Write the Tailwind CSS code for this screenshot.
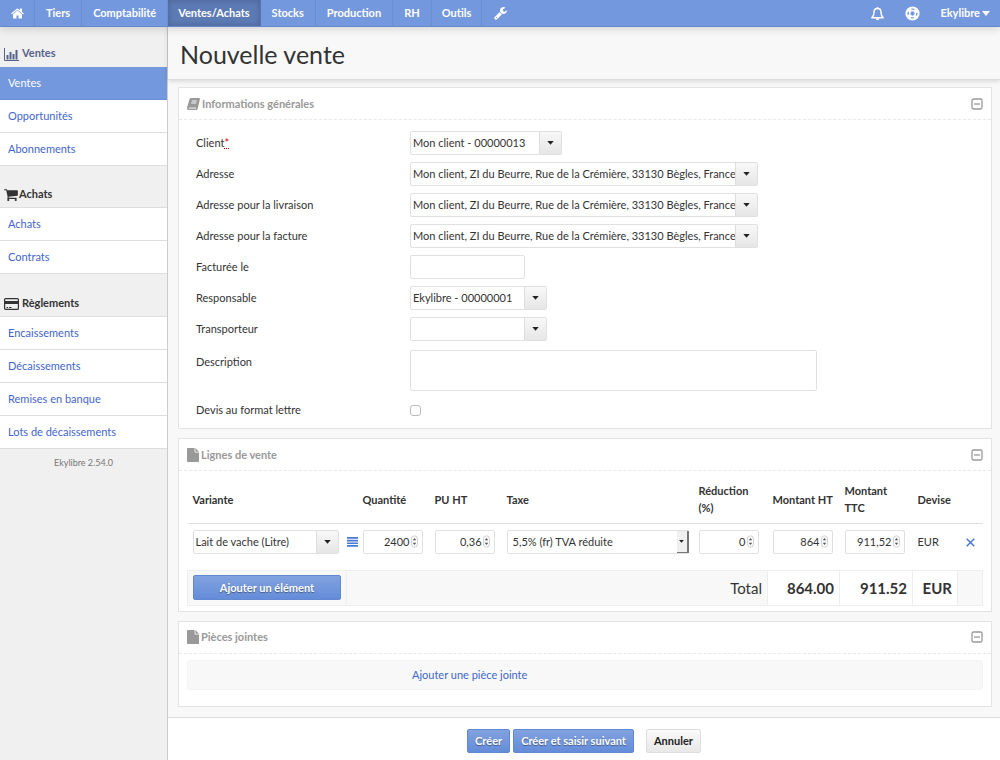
<!DOCTYPE html>
<html lang="fr">
<head>
<meta charset="utf-8">
<title>Nouvelle vente - Ekylibre</title>
<meta name="viewport" content="width=device-width, initial-scale=1">
<script src="https://cdn.jsdelivr.net/npm/@tailwindcss/browser@4"></script>
</head>
<body class="flex min-h-screen flex-col bg-[#f8f8f8] font-['Lato',sans-serif] text-[11px] leading-4 text-[#333]">

<svg class="hidden" aria-hidden="true">
  <symbol id="minus-square" viewBox="0 0 12 12"><rect x="1" y="1" width="10" height="10" rx="1.5" fill="none" stroke="#999" stroke-width="1.3"/><path d="M3 6h6" stroke="#999" stroke-width="1.3"/></symbol>
  <symbol id="file" viewBox="0 0 12 14"><path fill="#999" d="M.7 0H7.6V3.7q0 .8.8.8H12V13.3q0 .7-.7.7H.7Q0 14 0 13.3V.7Q0 0 .7 0zM8.4 0.1L11.9 3.7H8.4z"/></symbol>
  <symbol id="caret" viewBox="0 0 8 5"><path fill="#222" d="M0 0h8L4 4.6z"/></symbol>
  <symbol id="spin" viewBox="0 0 8 14"><rect x=".5" y=".5" width="7" height="13" rx="3.5" fill="#fbfbfb" stroke="#ccc"/><path fill="#555" d="M2 5.5L4 3l2 2.500zM2 8.500h4L4 11z"/></symbol>
</svg>

<header class="relative z-10 flex h-[27px] border-b border-[#6688cc] bg-[#7398de] text-[11px] font-bold text-white shadow-[0_2px_8px_rgba(0,0,0,0.15)]">
  <nav class="flex" aria-label="Principal">
    <a href="#" aria-label="Accueil" class="flex items-center border-r border-[#6b8dd2] pr-[10px] pl-[11px]"><svg class="h-[13px] w-[13px]" viewBox="64 200 1664 1400" fill="currentColor"><path d="M1472 992v480q0 26-19 45t-45 19h-384v-384h-256v384h-384q-26 0-45-19t-19-45v-480q0-1 .5-3t.5-3l575-474 575 474q1 2 1 6zm223-69l-62 74q-8 9-21 11h-3q-13 0-21-7l-692-577-692 577q-12 8-24 7-13-2-21-11l-62-74q-8-10-7-23.500t11-21.500l719-599q32-26 76-26t76 26l244 204v-195q0-14 9-23t23-9h192q14 0 23 9t9 23v408l219 182q10 8 11 21.500t-7 23.500z"/></svg></a>
    <a href="#" class="flex items-center border-r border-[#6b8dd2] px-[11px]">Tiers</a>
    <a href="#" class="flex items-center border-r border-[#6b8dd2] px-[11px]">Comptabilité</a>
    <a href="#" aria-current="page" class="flex items-center border-r border-[#5675b0] bg-[#5c7ab4] px-[10px] shadow-[inset_0_0_6px_rgba(0,0,0,0.2)]">Ventes/Achats</a>
    <a href="#" class="flex items-center border-r border-[#6b8dd2] px-[11px]">Stocks</a>
    <a href="#" class="flex items-center border-r border-[#6b8dd2] px-[11px]">Production</a>
    <a href="#" class="flex items-center border-r border-[#6b8dd2] px-[11px]">RH</a>
    <a href="#" class="flex items-center border-r border-[#6b8dd2] px-[10px]">Outils</a>
    <a href="#" aria-label="Configuration" class="flex items-center px-3"><svg class="h-[13px] w-[13px]" viewBox="60 120 1680 1680" fill="currentColor"><path d="M448 1472q0-26-19-45t-45-19-45 19-19 45 19 45 45 19 45-19 19-45zm644-420l-682 682q-37 37-90 37-52 0-91-37l-106-108q-38-36-38-90 0-53 38-91l681-681q39 98 114.500 173.500t173.500 114.500zm634-435q0 39-23 106-47 134-164.500 217.500t-258.500 83.500q-185 0-316.500-131.500t-131.500-316.500 131.500-316.500 316.500-131.500q58 0 121.500 16.500t107.500 46.500q16 11 16 28t-16 28l-293 169v224l193 107q5-3 79-48.500t135.500-81 70.500-35.500q15 0 23.500 10t8.500 25z"/></svg></a>
  </nav>
  <div class="ml-auto flex items-center pr-[10px]">
    <button type="button" aria-label="Notifications" class="mr-5"><svg class="h-[15px] w-[15px]" viewBox="0 0 15 15"><path fill="none" stroke="#fff" stroke-width="1.500" stroke-linejoin="round" d="M1.800 11.700C3.600 10 4 8.600 4 6.200 4 3.900 5.300 2.500 7.500 2.500S11 3.900 11 6.200c0 2.400.4 3.800 2.200 5.500z"/><path fill="#fff" d="M6.500 2.200Q6.500 1 7.500 1t1 1.200zM5.500 12.300h4q-.3 1.900-2 1.900t-2-1.900z"/></svg></button>
    <button type="button" aria-label="Aide" class="mr-5"><svg class="h-[15px] w-[15px]" viewBox="0 0 15 15" fill="none"><circle cx="7.500" cy="7.500" r="6.100" stroke="#fff" stroke-width="2"/><circle cx="7.500" cy="7.500" r="2.900" stroke="#fff" stroke-width="1.500"/><circle cx="7.500" cy="7.500" r="4.700" stroke="#fff" stroke-width="3" stroke-dasharray="4.380 3" stroke-dashoffset="2.190" transform="rotate(45 7.500 7.500)"/></svg></button>
    <button type="button" class="flex items-center gap-[2px] font-bold">Ekylibre<svg class="h-[5px] w-2" viewBox="0 0 8 5"><path fill="#fff" d="M0 0h8L4 5z"/></svg></button>
  </div>
</header>

<div class="flex flex-1">
  <aside class="w-[168px] shrink-0 border-r border-[#ccc] bg-[#f0f0f0]">
    <nav aria-label="Ventes et achats">
      <h2 class="flex h-10 items-end gap-[3px] pb-[6px] pl-1 font-bold text-[#56648c]"><svg class="h-[14px] w-[15px]" viewBox="0 0 15 14"><path fill="none" stroke="currentColor" d="M.5 1v12.500H15"/><path fill="currentColor" d="M2.500 8h2v4.500h-2zM5.500 5h2v7.500h-2zM8.500 7h2v5.500h-2zM11.500 3h2v9.500h-2z"/></svg>Ventes</h2>
      <ul class="text-[#3f66cc]">
        <li><a href="#" aria-current="page" class="block h-[33px] border-b border-[#6b90d8] bg-[#7398de] pl-2 leading-8 text-white">Ventes</a></li>
        <li><a href="#" class="block h-[33px] border-b border-[#ddd] bg-white pl-2 leading-8">Opportunités</a></li>
        <li><a href="#" class="block h-[33px] border-b border-[#ddd] bg-white pl-2 leading-8">Abonnements</a></li>
      </ul>
      <h2 class="flex h-[42px] items-end gap-px border-b border-[#ddd] pb-[5px] pl-1 font-bold"><svg class="h-[14px] w-[14px]" viewBox="64 200 1680 1480" fill="currentColor"><path d="M704 1536q0 52-38 90t-90 38-90-38-38-90 38-90 90-38 90 38 38 90zm896 0q0 52-38 90t-90 38-90-38-38-90 38-90 90-38 90 38 38 90zm128-1088v512q0 24-16.500 42.500t-40.500 21.500l-1044 122q13 60 13 70 0 16-24 64h920q26 0 45 19t19 45-19 45-45 19h-1024q-26 0-45-19t-19-45q0-11 8-31.500t16-36 21.500-40 15.500-29.500l-177-823h-204q-26 0-45-19t-19-45 19-45 45-19h256q16 0 28.500 6.500t19.500 15.500 13 24.500 8 26 5.500 29.500 4.500 26h1201q26 0 45 19t19 45z"/></svg>Achats</h2>
      <ul class="text-[#3f66cc]">
        <li><a href="#" class="block h-[33px] border-b border-[#ddd] bg-white pl-2 leading-8">Achats</a></li>
        <li><a href="#" class="block h-[33px] border-b border-[#ddd] bg-white pl-2 leading-8">Contrats</a></li>
      </ul>
      <h2 class="flex h-[43px] items-end gap-[3px] border-b border-[#ddd] pb-[5px] pl-1 font-bold"><svg class="h-[14px] w-[15px]" viewBox="0 0 15 14"><rect x=".6" y="1.600" width="13.800" height="10.800" rx="1" fill="none" stroke="currentColor" stroke-width="1.200"/><path fill="currentColor" d="M1 4h13v3H1zM2.500 10h1.500v1H2.500zM5 10h2.500v1H5z"/></svg>Règlements</h2>
      <ul class="text-[#3f66cc]">
        <li><a href="#" class="block h-[33px] border-b border-[#ddd] bg-white pl-2 leading-8">Encaissements</a></li>
        <li><a href="#" class="block h-[33px] border-b border-[#ddd] bg-white pl-2 leading-8">Décaissements</a></li>
        <li><a href="#" class="block h-[33px] border-b border-[#ddd] bg-white pl-2 leading-8">Remises en banque</a></li>
        <li><a href="#" class="block h-[33px] border-b border-[#ddd] bg-white pl-2 leading-8">Lots de décaissements</a></li>
      </ul>
    </nav>
    <p class="pt-[6px] text-center text-[9px] text-[#777]">Ekylibre 2.54.0</p>
  </aside>

  <main class="flex min-w-0 flex-1 flex-col">
    <div class="border-b border-[#ddd] bg-[#f8f8f8] px-3 pt-[7px] pb-[5px] shadow-[0_1px_5px_rgba(0,0,0,0.15)]">
      <h1 class="text-[25px] leading-10">Nouvelle vente</h1>
    </div>

    <form class="flex flex-1 flex-col">
      <div class="flex flex-1 flex-col gap-[9px] pt-[7px] pr-2 pl-[10px]">

        <section class="border border-[#e3e3e3] bg-white">
          <div class="flex h-8 items-center border-b border-dashed border-[#e8e8e8] px-2">
            <svg class="mr-[2px] h-3 w-[13px]" viewBox="0 0 13 12"><path fill="#999" d="M4.200 0H12q1.200 0 .9 1.200L10.700 10.500Q10.300 12 9 12H1.600Q0 12 0 10.300q0-.5.2-1.200L2.500 1.300Q2.900 0 4.200 0z"/><path fill="none" stroke="#fff" stroke-width=".9" d="M4.800 3h5M4.200 5h5M1.800 10.100h7.300"/></svg>
            <h2 class="font-bold text-[#999]">Informations générales</h2>
            <button type="button" aria-label="Replier les informations générales" class="ml-auto"><svg class="h-3 w-3"><use href="#minus-square"/></svg></button>
          </div>
          <div class="flex flex-col gap-[7px] px-[17px] pt-[11px] pb-2">
            <div class="flex items-center"><label for="client" class="w-[214px]">Client<abbr title="Obligatoire" class="text-[#d00] underline decoration-dotted">*</abbr></label>
              <div class="flex h-6 w-[152px] rounded-[2px] border border-[#e0e0e0] bg-white"><input id="client" class="min-w-0 flex-1 pl-[2px]" value="Mon client - 00000013"><button type="button" aria-label="Choisir le client" class="flex w-[22px] items-center justify-center border-l border-[#ddd] bg-linear-to-b from-[#f8f8f8] to-[#e6e6e6]"><svg class="h-[4px] w-[7px]"><use href="#caret"/></svg></button></div></div>
            <div class="flex items-center"><label for="adresse" class="w-[214px]">Adresse</label>
              <div class="flex h-6 w-[348px] rounded-[2px] border border-[#e0e0e0] bg-white"><input id="adresse" class="min-w-0 flex-1 pl-[2px]" value="Mon client, ZI du Beurre, Rue de la Crémière, 33130 Bègles, France"><button type="button" aria-label="Choisir l’adresse" class="flex w-[22px] items-center justify-center border-l border-[#ddd] bg-linear-to-b from-[#f8f8f8] to-[#e6e6e6]"><svg class="h-[4px] w-[7px]"><use href="#caret"/></svg></button></div></div>
            <div class="flex items-center"><label for="livraison" class="w-[214px]">Adresse pour la livraison</label>
              <div class="flex h-6 w-[348px] rounded-[2px] border border-[#e0e0e0] bg-white"><input id="livraison" class="min-w-0 flex-1 pl-[2px]" value="Mon client, ZI du Beurre, Rue de la Crémière, 33130 Bègles, France"><button type="button" aria-label="Choisir l’adresse de livraison" class="flex w-[22px] items-center justify-center border-l border-[#ddd] bg-linear-to-b from-[#f8f8f8] to-[#e6e6e6]"><svg class="h-[4px] w-[7px]"><use href="#caret"/></svg></button></div></div>
            <div class="flex items-center"><label for="facture" class="w-[214px]">Adresse pour la facture</label>
              <div class="flex h-6 w-[348px] rounded-[2px] border border-[#e0e0e0] bg-white"><input id="facture" class="min-w-0 flex-1 pl-[2px]" value="Mon client, ZI du Beurre, Rue de la Crémière, 33130 Bègles, France"><button type="button" aria-label="Choisir l’adresse de facturation" class="flex w-[22px] items-center justify-center border-l border-[#ddd] bg-linear-to-b from-[#f8f8f8] to-[#e6e6e6]"><svg class="h-[4px] w-[7px]"><use href="#caret"/></svg></button></div></div>
            <div class="flex items-center"><label for="date" class="w-[214px]">Facturée le</label>
              <input id="date" class="h-6 w-[115px] rounded-[2px] border border-[#e0e0e0] bg-white px-[2px]"></div>
            <div class="flex items-center"><label for="responsable" class="w-[214px]">Responsable</label>
              <div class="flex h-6 w-[137px] rounded-[2px] border border-[#e0e0e0] bg-white"><input id="responsable" class="min-w-0 flex-1 pl-[2px]" value="Ekylibre - 00000001"><button type="button" aria-label="Choisir le responsable" class="flex w-[22px] items-center justify-center border-l border-[#ddd] bg-linear-to-b from-[#f8f8f8] to-[#e6e6e6]"><svg class="h-[4px] w-[7px]"><use href="#caret"/></svg></button></div></div>
            <div class="flex items-center"><label for="transporteur" class="w-[214px]">Transporteur</label>
              <div class="flex h-6 w-[137px] rounded-[2px] border border-[#e0e0e0] bg-white"><input id="transporteur" class="min-w-0 flex-1 pl-[2px]"><button type="button" aria-label="Choisir le transporteur" class="flex w-[22px] items-center justify-center border-l border-[#ddd] bg-linear-to-b from-[#f8f8f8] to-[#e6e6e6]"><svg class="h-[4px] w-[7px]"><use href="#caret"/></svg></button></div></div>
            <div class="flex items-start pt-[2px]"><label for="description" class="w-[214px] pt-1">Description</label>
              <textarea id="description" class="block h-[41px] w-[407px] resize-none rounded-[2px] border border-[#e0e0e0] bg-white px-[2px]"></textarea></div>
            <div class="flex items-center pt-[2px]"><label for="lettre" class="w-[214px] leading-5">Devis au format lettre</label>
              <input id="lettre" type="checkbox" class="h-[11px] w-[11px] appearance-none rounded-[3px] border border-[#bbb] bg-white checked:bg-[#7398de]"></div>
          </div>
        </section>

        <section class="border border-[#e3e3e3] bg-white">
          <div class="flex h-8 items-center border-b border-dashed border-[#e8e8e8] px-2">
            <svg class="mr-[2px] h-[14px] w-3"><use href="#file"/></svg>
            <h2 class="font-bold text-[#999]">Lignes de vente</h2>
            <button type="button" aria-label="Replier les lignes de vente" class="ml-auto"><svg class="h-3 w-3"><use href="#minus-square"/></svg></button>
          </div>
          <div class="px-2 pt-[5px] pb-[5px]">
            <table class="w-full table-fixed border-collapse text-left">
              <colgroup><col class="w-[159px]"><col class="w-[11px]"><col class="w-[72px]"><col class="w-[72px]"><col><col class="w-[74px]"><col class="w-[72px]"><col class="w-[73px]"><col class="w-[45px]"><col class="w-[25px]"></colgroup>
              <thead>
                <tr class="h-[47px] border-b border-[#ddd] leading-[17px]">
                  <th scope="col" colspan="2" class="px-[5px]">Variante</th><th scope="col" class="px-[5px]">Quantité</th><th scope="col" class="px-[5px]">PU HT</th><th scope="col" class="px-[5px]">Taxe</th><th scope="col" class="px-[5px]">Réduction (%)</th><th scope="col" class="pl-[5px] whitespace-nowrap">Montant HT</th><th scope="col" class="px-[5px]">Montant TTC</th><th scope="col" class="pl-[5px]">Devise</th><td></td>
                </tr>
              </thead>
              <tbody>
                <tr class="h-[47px] align-top">
                  <td class="px-[5px] pt-[6px]"><div class="flex h-6 w-[146px] rounded-[2px] border border-[#e0e0e0] bg-white"><input aria-label="Variante" class="min-w-0 flex-1 pl-[2px]" value="Lait de vache (Litre)"><button type="button" aria-label="Choisir la variante" class="flex w-[22px] items-center justify-center border-l border-[#ddd] bg-linear-to-b from-[#f8f8f8] to-[#e6e6e6]"><svg class="h-[4px] w-[7px]"><use href="#caret"/></svg></button></div></td>
                  <td class="pt-[13px]"><button type="button" aria-label="Détails de la ligne" class="block"><svg class="h-[10px] w-[11px]" viewBox="0 0 11 10"><path fill="#4a78d6" d="M0 0h11v1.700H0zM0 2.700h11v1.700H0zM0 5.400h11v1.700H0zM0 8.100h11v1.700H0z"/></svg></button></td>
                  <td class="px-[5px] pt-[6px]"><div class="flex h-6 w-[60px] items-center rounded-[2px] border border-[#e0e0e0] bg-white pr-1"><input aria-label="Quantité" inputmode="decimal" class="min-w-0 flex-1 text-right" value="2400"><svg class="ml-px h-[13px] w-[7px]"><use href="#spin"/></svg></div></td>
                  <td class="px-[5px] pt-[6px]"><div class="flex h-6 w-[60px] items-center rounded-[2px] border border-[#e0e0e0] bg-white pr-1"><input aria-label="Prix unitaire HT" inputmode="decimal" class="min-w-0 flex-1 text-right" value="0,36"><svg class="ml-px h-[13px] w-[7px]"><use href="#spin"/></svg></div></td>
                  <td class="px-[5px] pt-[6px]"><div class="relative"><select aria-label="Taxe" class="h-6 w-full appearance-none rounded-[2px] border border-[#e0e0e0] bg-white pl-[5px]"><option>5,5% (fr) TVA réduite</option></select><span class="pointer-events-none absolute top-px right-0 flex h-[22px] w-3 items-center justify-center border-r-2 border-b border-[#777] bg-[#f0f0f0]"><svg class="h-[3px] w-[5px]"><use href="#caret"/></svg></span></div></td>
                  <td class="px-[5px] pt-[6px]"><div class="flex h-6 w-[60px] items-center rounded-[2px] border border-[#e0e0e0] bg-white pr-1"><input aria-label="Réduction en pourcentage" inputmode="decimal" class="min-w-0 flex-1 text-right" value="0"><svg class="ml-px h-[13px] w-[7px]"><use href="#spin"/></svg></div></td>
                  <td class="px-[5px] pt-[6px]"><div class="flex h-6 w-[60px] items-center rounded-[2px] border border-[#e0e0e0] bg-white pr-1"><input aria-label="Montant HT" inputmode="decimal" class="min-w-0 flex-1 text-right" value="864"><svg class="ml-px h-[13px] w-[7px]"><use href="#spin"/></svg></div></td>
                  <td class="px-[5px] pt-[6px]"><div class="flex h-6 w-[60px] items-center rounded-[2px] border border-[#e0e0e0] bg-white pr-1"><input aria-label="Montant TTC" inputmode="decimal" class="min-w-0 flex-1 text-right" value="911,52"><svg class="ml-px h-[13px] w-[7px]"><use href="#spin"/></svg></div></td>
                  <td class="pt-[10px] pl-[5px]">EUR</td>
                  <td class="pt-[14px]"><button type="button" aria-label="Supprimer la ligne" class="mx-auto block"><svg class="h-[9px] w-[9px]" viewBox="0 0 9 9"><path stroke="#4a78d6" stroke-width="1.500" d="M.7.7l7.600 7.600M8.300.7L.7 8.300"/></svg></button></td>
                </tr>
              </tbody>
              <tfoot>
                <tr class="h-[35px] border border-[#eee] bg-[#f8f8f8] text-[15px] leading-5">
                  <td class="border-r border-[#eee] px-[5px]"><button type="button" class="block h-[25px] w-full rounded-[2px] border border-[#6288d0] bg-linear-to-b from-[#82a2e0] to-[#648cd8] text-[11px] font-bold text-white [text-shadow:0_1px_1px_rgba(0,0,0,0.4)]">Ajouter un élément</button></td>
                  <td colspan="5" class="pr-[5px] text-right">Total</td>
                  <td class="border-x border-[#eee] bg-white pr-[5px] text-right font-bold">864.00</td>
                  <td class="border-r border-[#eee] bg-white pr-[5px] text-right font-bold">911.52</td>
                  <td class="border-r border-[#eee] bg-white pr-[5px] text-right font-bold">EUR</td>
                  <td></td>
                </tr>
              </tfoot>
            </table>
          </div>
        </section>

        <section class="border border-[#e3e3e3] bg-white">
          <div class="flex h-8 items-center border-b border-dashed border-[#e8e8e8] px-2">
            <svg class="mr-[2px] h-[14px] w-3"><use href="#file"/></svg>
            <h2 class="font-bold text-[#999]">Pièces jointes</h2>
            <button type="button" aria-label="Replier les pièces jointes" class="ml-auto"><svg class="h-3 w-3"><use href="#minus-square"/></svg></button>
          </div>
          <div class="px-2 pt-[6px] pb-4">
            <div class="flex h-[30px] items-center rounded-[3px] border border-[#f3f3f3] bg-[#f8f8f8] pl-56 text-[#3f66cc]"><a href="#">Ajouter une pièce jointe</a></div>
          </div>
        </section>
      </div>

      <div class="flex h-[43px] justify-center border-t border-[#ddd] bg-white pt-[11px] font-bold">
        <button type="submit" class="h-6 rounded-[2px] border border-[#6288d0] bg-linear-to-b from-[#82a2e0] to-[#648cd8] px-[7px] text-white [text-shadow:0_1px_1px_rgba(0,0,0,0.4)]">Créer</button>
        <button type="submit" class="ml-[3px] h-6 rounded-[2px] border border-[#6288d0] bg-linear-to-b from-[#82a2e0] to-[#648cd8] px-[7px] text-white [text-shadow:0_1px_1px_rgba(0,0,0,0.4)]">Créer et saisir suivant</button>
        <button type="button" class="ml-3 h-6 rounded-[2px] border border-[#ddd] bg-linear-to-b from-[#fafafa] to-[#e8e8e8] px-[7px] text-[#222]">Annuler</button>
      </div>
    </form>
  </main>
</div>
</body>
</html>
